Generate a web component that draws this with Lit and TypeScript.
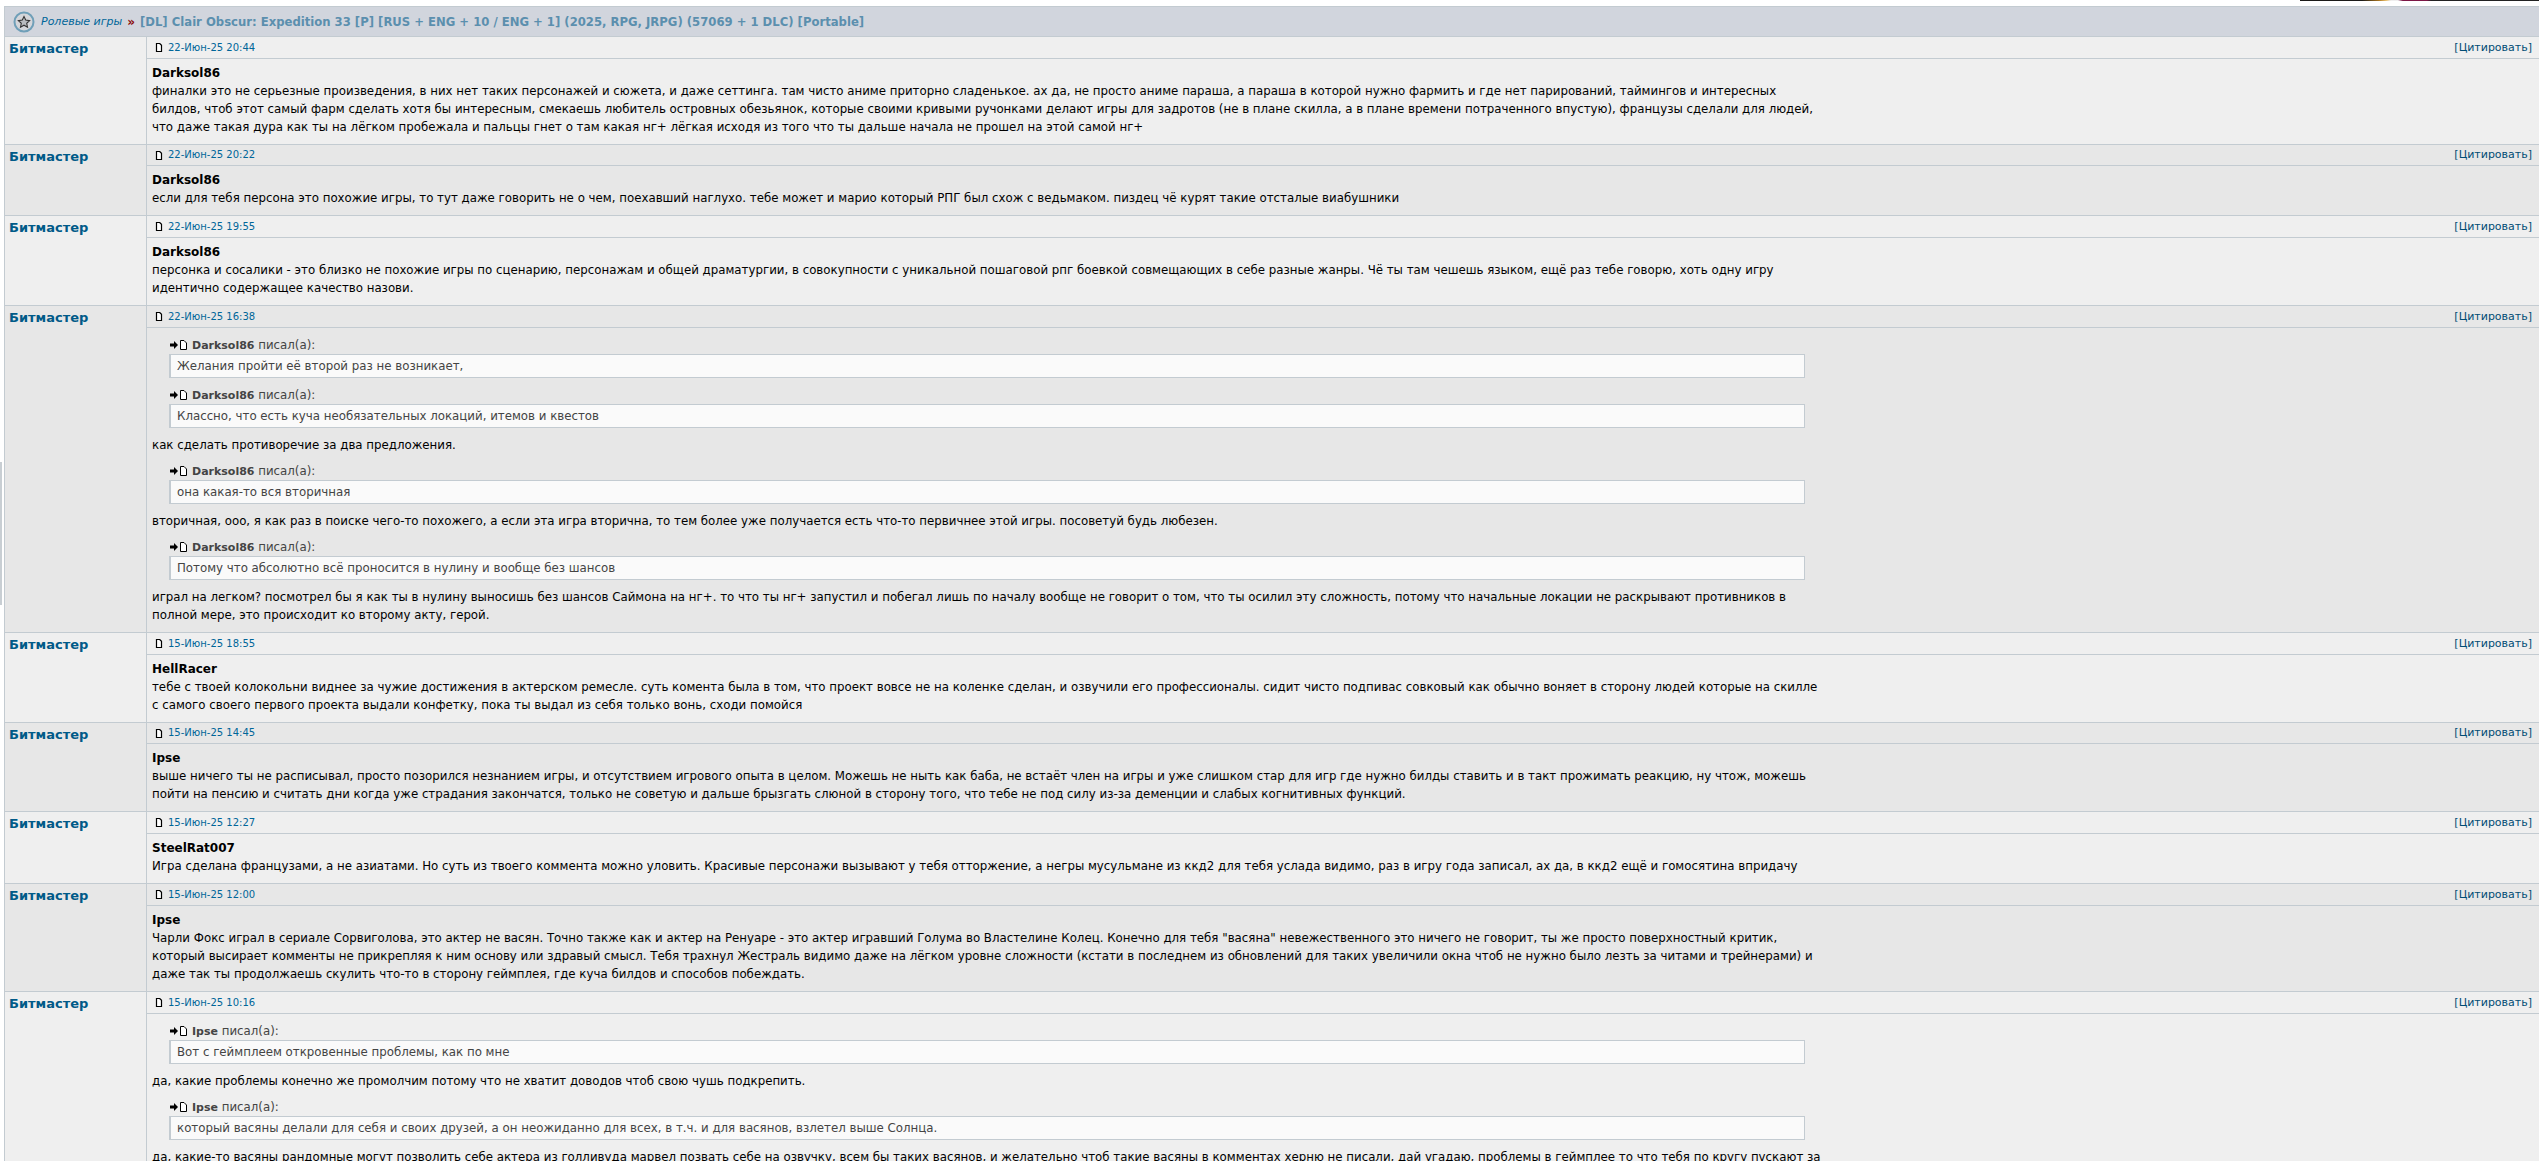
import { LitElement, html, css } from "lit";
import { customElement } from "lit/decorators.js";

type Block = { q?: string; by?: string; lines?: string[] };
type Post = { date: string; author?: string; tight?: boolean; blocks: Block[] };

const posts: Post[] = [
  { date: "22-Июн-25 20:44", author: "Darksol86", blocks: [{ lines: [
    "финалки это не серьезные произведения, в них нет таких персонажей и сюжета, и даже сеттинга. там чисто аниме приторно сладенькое. ах да, не просто аниме параша, а параша в которой нужно фармить и где нет парирований, таймингов и интересных",
    "билдов, чтоб этот самый фарм сделать хотя бы интересным, смекаешь любитель островных обезьянок, которые своими кривыми ручонками делают игры для задротов (не в плане скилла, а в плане времени потраченного впустую), французы сделали для людей,",
    "что даже такая дура как ты на лёгком пробежала и пальцы гнет о там какая нг+ лёгкая исходя из того что ты дальше начала не прошел на этой самой нг+",
  ] }] },
  { date: "22-Июн-25 20:22", author: "Darksol86", tight: true, blocks: [{ lines: [
    "если для тебя персона это похожие игры, то тут даже говорить не о чем, поехавший наглухо. тебе может и марио который РПГ был схож с ведьмаком. пиздец чё курят такие отсталые виабушники",
  ] }] },
  { date: "22-Июн-25 19:55", author: "Darksol86", blocks: [{ lines: [
    "персонка и сосалики - это близко не похожие игры по сценарию, персонажам и общей драматургии, в совокупности с уникальной пошаговой рпг боевкой совмещающих в себе разные жанры. Чё ты там чешешь языком, ещё раз тебе говорю, хоть одну игру",
    "идентично содержащее качество назови.",
  ] }] },
  { date: "22-Июн-25 16:38", blocks: [
    { by: "Darksol86", q: "Желания пройти её второй раз не возникает," },
    { by: "Darksol86", q: "Классно, что есть куча необязательных локаций, итемов и квестов" },
    { lines: ["как сделать противоречие за два предложения."] },
    { by: "Darksol86", q: "она какая-то вся вторичная" },
    { lines: ["вторичная, ооо, я как раз в поиске чего-то похожего, а если эта игра вторична, то тем более уже получается есть что-то первичнее этой игры. посоветуй будь любезен."] },
    { by: "Darksol86", q: "Потому что абсолютно всё проносится в нулину и вообще без шансов" },
    { lines: [
      "играл на легком? посмотрел бы я как ты в нулину выносишь без шансов Саймона на нг+. то что ты нг+ запустил и побегал лишь по началу вообще не говорит о том, что ты осилил эту сложность, потому что начальные локации не раскрывают противников в",
      "полной мере, это происходит ко второму акту, герой.",
    ] },
  ] },
  { date: "15-Июн-25 18:55", author: "HellRacer", blocks: [{ lines: [
    "тебе с твоей колокольни виднее за чужие достижения в актерском ремесле. суть комента была в том, что проект вовсе не на коленке сделан, и озвучили его профессионалы. сидит чисто подпивас совковый как обычно воняет в сторону людей которые на скилле",
    "с самого своего первого проекта выдали конфетку, пока ты выдал из себя только вонь, сходи помойся",
  ] }] },
  { date: "15-Июн-25 14:45", author: "Ipse", tight: true, blocks: [{ lines: [
    "выше ничего ты не расписывал, просто позорился незнанием игры, и отсутствием игрового опыта в целом. Можешь не ныть как баба, не встаёт член на игры и уже слишком стар для игр где нужно билды ставить и в такт прожимать реакцию, ну чтож, можешь",
    "пойти на пенсию и считать дни когда уже страдания закончатся, только не советую и дальше брызгать слюной в сторону того, что тебе не под силу из-за деменции и слабых когнитивных функций.",
  ] }] },
  { date: "15-Июн-25 12:27", author: "SteelRat007", blocks: [{ lines: [
    "Игра сделана французами, а не азиатами. Но суть из твоего коммента можно уловить. Красивые персонажи вызывают у тебя отторжение, а негры мусульмане из ккд2 для тебя услада видимо, раз в игру года записал, ах да, в ккд2 ещё и гомосятина впридачу",
  ] }] },
  { date: "15-Июн-25 12:00", author: "Ipse", blocks: [{ lines: [
    "Чарли Фокс играл в сериале Сорвиголова, это актер не васян. Точно также как и актер на Ренуаре - это актер игравший Голума во Властелине Колец. Конечно для тебя \"васяна\" невежественного это ничего не говорит, ты же просто поверхностный критик,",
    "который высирает комменты не прикрепляя к ним основу или здравый смысл. Тебя трахнул Жестраль видимо даже на лёгком уровне сложности (кстати в последнем из обновлений для таких увеличили окна чтоб не нужно было лезть за читами и трейнерами) и",
    "даже так ты продолжаешь скулить что-то в сторону геймплея, где куча билдов и способов побеждать.",
  ] }] },
  { date: "15-Июн-25 10:16", blocks: [
    { by: "Ipse", q: "Вот с геймплеем откровенные проблемы, как по мне" },
    { lines: ["да, какие проблемы конечно же промолчим потому что не хватит доводов чтоб свою чушь подкрепить."] },
    { by: "Ipse", q: "который васяны делали для себя и своих друзей, а он неожиданно для всех, в т.ч. и для васянов, взлетел выше Солнца." },
    { lines: ["да, какие-то васяны рандомные могут позволить себе актера из голливуда марвел позвать себе на озвучку, всем бы таких васянов, и желательно чтоб такие васяны в комментах херню не писали, дай угадаю, проблемы в геймплее то что тебя по кругу пускают за"] },
  ] },
];

const docIcon = html`<svg class="doc" width="8" height="9" viewBox="0 0 8 9"><path d="M1.500.5h3.200l1.800 1.800v6.200h-5z" fill="#fff" stroke="#000" stroke-width="1.200"/></svg>`;
const quoteIcon = html`<svg class="qi" width="18" height="10" viewBox="0 0 18 10"><path d="M0 3.500h4V1l4 4-4 4V6.500H0z" fill="#000"/><path d="M10.500.5h3.500l2.500 2.500v6.500h-6z" fill="#fff" stroke="#000" stroke-width="1"/></svg>`;

@customElement("app-root")
export class AppRoot extends LitElement {
  static styles = css`
    :host { display: block; height: 100vh; overflow: hidden; background: #fff; position: relative;
      font-family: "DejaVu Sans", Verdana, sans-serif; font-size: 11.8px; line-height: 18px; color: #000; }
    .band { height: 6px; display: flex; justify-content: flex-end; }
    .strip { width: 239px; height: 1px;
      background: linear-gradient(90deg, #1b1a18 0 26%, #a8741f 33%, #e8c070 36%, #eee 38%, #eee 41%, #7c1746 43% 53%, #222 55% 100%); }
    .edge { position: absolute; left: 0; top: 462px; width: 2px; height: 143px; background: #c8ced3; }
    .table { margin-left: 4px; border-left: 1px solid #c3cbd1; }
    .title { display: flex; align-items: center; height: 29px; background: #d1d5dd;
      border-top: 1px solid #c3cbd1; border-bottom: 1px solid #c3cbd1; padding-left: 8px; }
    .title svg { flex: none; margin-right: 6px; }
    .crumb { font-style: italic; color: #006699; font-size: 11px; }
    .sep { color: #8b0a0a; font-weight: bold; font-size: 12px; margin: 0 5px; }
    .topic { color: #5b8fae; font-weight: bold; font-size: 11.65px; white-space: nowrap; }
    .row { display: grid; grid-template-columns: 142px 1fr; border-bottom: 1px solid #c3cbd1; background: #efefef; }
    .row.even { background: #e7e7e7; }
    .nick { padding: 1px 0 0 4px; border-right: 1px solid #c3cbd1; color: #005a88; font-weight: bold; font-size: 13px; line-height: 22px; }
    .head { height: 21px; display: flex; align-items: center; justify-content: space-between; padding: 0 7px 0 8px;
      border-bottom: 1px solid #c3cbd1; box-sizing: content-box; }
    .row.tight .head { height: 20px; }
    .date { color: #006699; font-size: 10px; display: flex; align-items: center; gap: 5px; }
    .cite { color: #004c74; font-size: 11px; }
    .body { padding: 5px 5px 8px; width: 1670px; }
    .author { font-weight: bold; font-size: 12px; }
    .text { white-space: nowrap; margin-bottom: 8px; }
    .text:last-child { margin-bottom: 0; }
    .qw { margin: 0 17px 8px; color: #444; }
    .qw:first-child { margin-top: 3px; }
    .qh { display: flex; align-items: center; gap: 4px; padding-left: 1px; height: 18px; }
    .qh b { font-size: 11px; }
    .qb { border: 1px solid #c3cbd1; border-left-width: 2px; background: #fafafa; padding: 2px 6px; height: 18px; white-space: nowrap; }
    .qi, .doc { flex: none; }
  `;

  render() {
    return html`
      <div class="band"><div class="strip"></div></div>
      <div class="edge"></div>
      <div class="table">
        <div class="title">
          <svg width="22" height="22" viewBox="0 0 22 22">
            <circle cx="11" cy="11" r="9.500" fill="#d4d6da" stroke="#6f9fb8" stroke-width="2"/>
            <path d="M11 5.500l1.700 3.600 3.900.5-2.900 2.700.8 3.900-3.500-2-3.500 2 .8-3.900-2.900-2.700 3.900-.5z" fill="#b9bcc0" stroke="#333" stroke-width="1.100"/>
          </svg>
          <span class="crumb">Ролевые игры</span><span class="sep">»</span>
          <span class="topic">[DL] Clair Obscur: Expedition 33 [P] [RUS + ENG + 10 / ENG + 1] (2025, RPG, JRPG) (57069 + 1 DLC) [Portable]</span>
        </div>
        ${posts.map((p, i) => html`
          <div class="row ${i % 2 ? "even" : ""} ${p.tight ? "tight" : ""}">
            <div class="nick">Битмастер</div>
            <div>
              <div class="head">
                <span class="date">${docIcon}<span>${p.date}</span></span>
                <span class="cite">[Цитировать]</span>
              </div>
              <div class="body">
                ${p.author ? html`<div class="author">${p.author}</div>` : ""}
                ${p.blocks.map((b) => b.q
                  ? html`<div class="qw">
                      <div class="qh">${quoteIcon}<span><b>${b.by}</b> писал(а):</span></div>
                      <div class="qb">${b.q}</div>
                    </div>`
                  : html`<div class="text">${b.lines!.map((l) => html`${l}<br />`)}</div>`)}
              </div>
            </div>
          </div>`)}
      </div>
    `;
  }
}
